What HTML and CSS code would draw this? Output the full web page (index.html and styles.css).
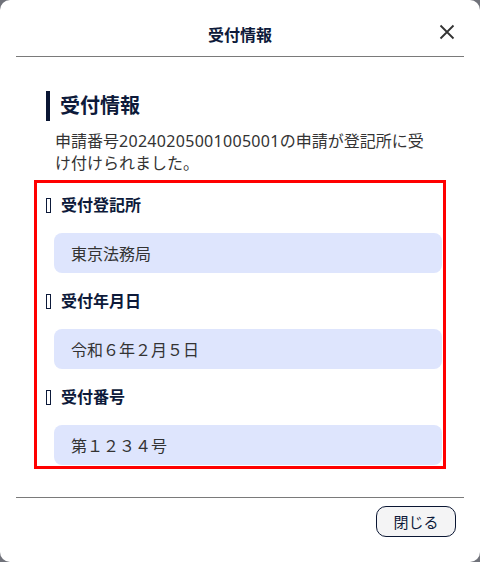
FILE: index.html
```html
<!DOCTYPE html>
<html lang="ja">
<head>
<meta charset="utf-8">
<title>受付情報</title>
<link rel="stylesheet" href="styles.css">
</head>
<body>
<div class="dialog">
  <header class="dlg-header">
    <span></span>
    <h1 class="dlg-title">受付情報</h1>
    <button class="close-btn" aria-label="閉じる">
      <svg width="16" height="16" viewBox="0 0 16 16"><path d="M1.5 1.5 L14.5 14.5 M14.5 1.5 L1.5 14.5" stroke="#333" stroke-width="1.8" fill="none"/></svg>
    </button>
  </header>
  <main class="dlg-body">
    <h2 class="sec-title">受付情報</h2>
    <p class="sec-text">申請番号<span class="num">20240205001005001</span>の申請が登記所に受け付けられました。</p>
    <div class="highlight">
      <div class="item">
        <div class="label"><span class="tofu"></span>受付登記所</div>
        <div class="value">東京法務局</div>
      </div>
      <div class="item">
        <div class="label"><span class="tofu"></span>受付年月日</div>
        <div class="value">令和６年２月５日</div>
      </div>
      <div class="item">
        <div class="label"><span class="tofu"></span>受付番号</div>
        <div class="value">第１２３４号</div>
      </div>
    </div>
  </main>
  <footer class="dlg-footer">
    <button class="btn-close">閉じる</button>
  </footer>
</div>
</body>
</html>
```
FILE: styles.css
```css
html, body {
  margin: 0;
  padding: 0;
  height: 100%;
}
body {
  background: #70727a;
  font-family: "Noto Sans", "Noto Sans CJK JP", sans-serif;
  color: #333;
}
.dialog {
  background: #fff;
  width: 480px;
  height: 562px;
  border-radius: 10px;
  display: flex;
  flex-direction: column;
  box-sizing: border-box;
}
.dlg-header {
  margin: 0 16px;
  height: 57px;
  box-sizing: border-box;
  padding-top: 13px;
  border-bottom: 1px solid #7a7a7a;
  display: grid;
  grid-template-columns: 1fr auto 1fr;
  align-items: center;
}
.dlg-title {
  margin: 0;
  font-size: 16px;
  font-weight: 700;
  color: #0d1a3a;
  line-height: 22px;
}
.close-btn {
  justify-self: end;
  margin-right: 9px;
  margin-top: -6px;
  border: 0;
  background: none;
  padding: 0;
  width: 16px;
  height: 16px;
  display: flex;
}
.dlg-body {
  padding: 34px 34px 0 34px;
  height: 440px;
  box-sizing: border-box;
}
.sec-title {
  margin: 0 0 0 12px;
  border-left: 4px solid #0a1633;
  padding-left: 10px;
  font-size: 20px;
  line-height: 30px;
  font-weight: 700;
  color: #0d1a3a;
}
.sec-text {
  margin: 9px 12px 0 21px;
  font-size: 16px;
  line-height: 22px;
  color: #333;
}
.num {
  letter-spacing: 0.3px;
}
.highlight {
  margin-top: 6px;
  border: 3px solid #ff0000;
  padding: 10px 1px 1px 9px;
  display: flex;
  flex-direction: column;
  gap: 16px;
}
.label {
  display: flex;
  align-items: center;
  gap: 10px;
  font-size: 16px;
  line-height: 24px;
  font-weight: 700;
  color: #0d1a3a;
}
.tofu {
  display: inline-block;
  width: 3px;
  height: 13px;
  border: 1px solid #0d1a3a;
}
.value {
  margin: 16px 0 0 8px;
  height: 40px;
  border-radius: 8px;
  background: #dee5fd;
  padding-left: 17px;
  display: flex;
  align-items: center;
  font-size: 16px;
  color: #333;
}
.dlg-footer {
  margin: 0 16px;
  border-top: 1px solid #7a7a7a;
  padding: 8px 8px 0 0;
  display: flex;
  justify-content: flex-end;
}
.btn-close {
  width: 80px;
  height: 31px;
  border: 1.5px solid #0a1633;
  border-radius: 10px;
  background: #f4f4f5;
  font-family: "Noto Sans", "Noto Sans CJK JP", sans-serif;
  font-size: 15px;
  color: #0d1a3a;
  padding: 0;
}
```
